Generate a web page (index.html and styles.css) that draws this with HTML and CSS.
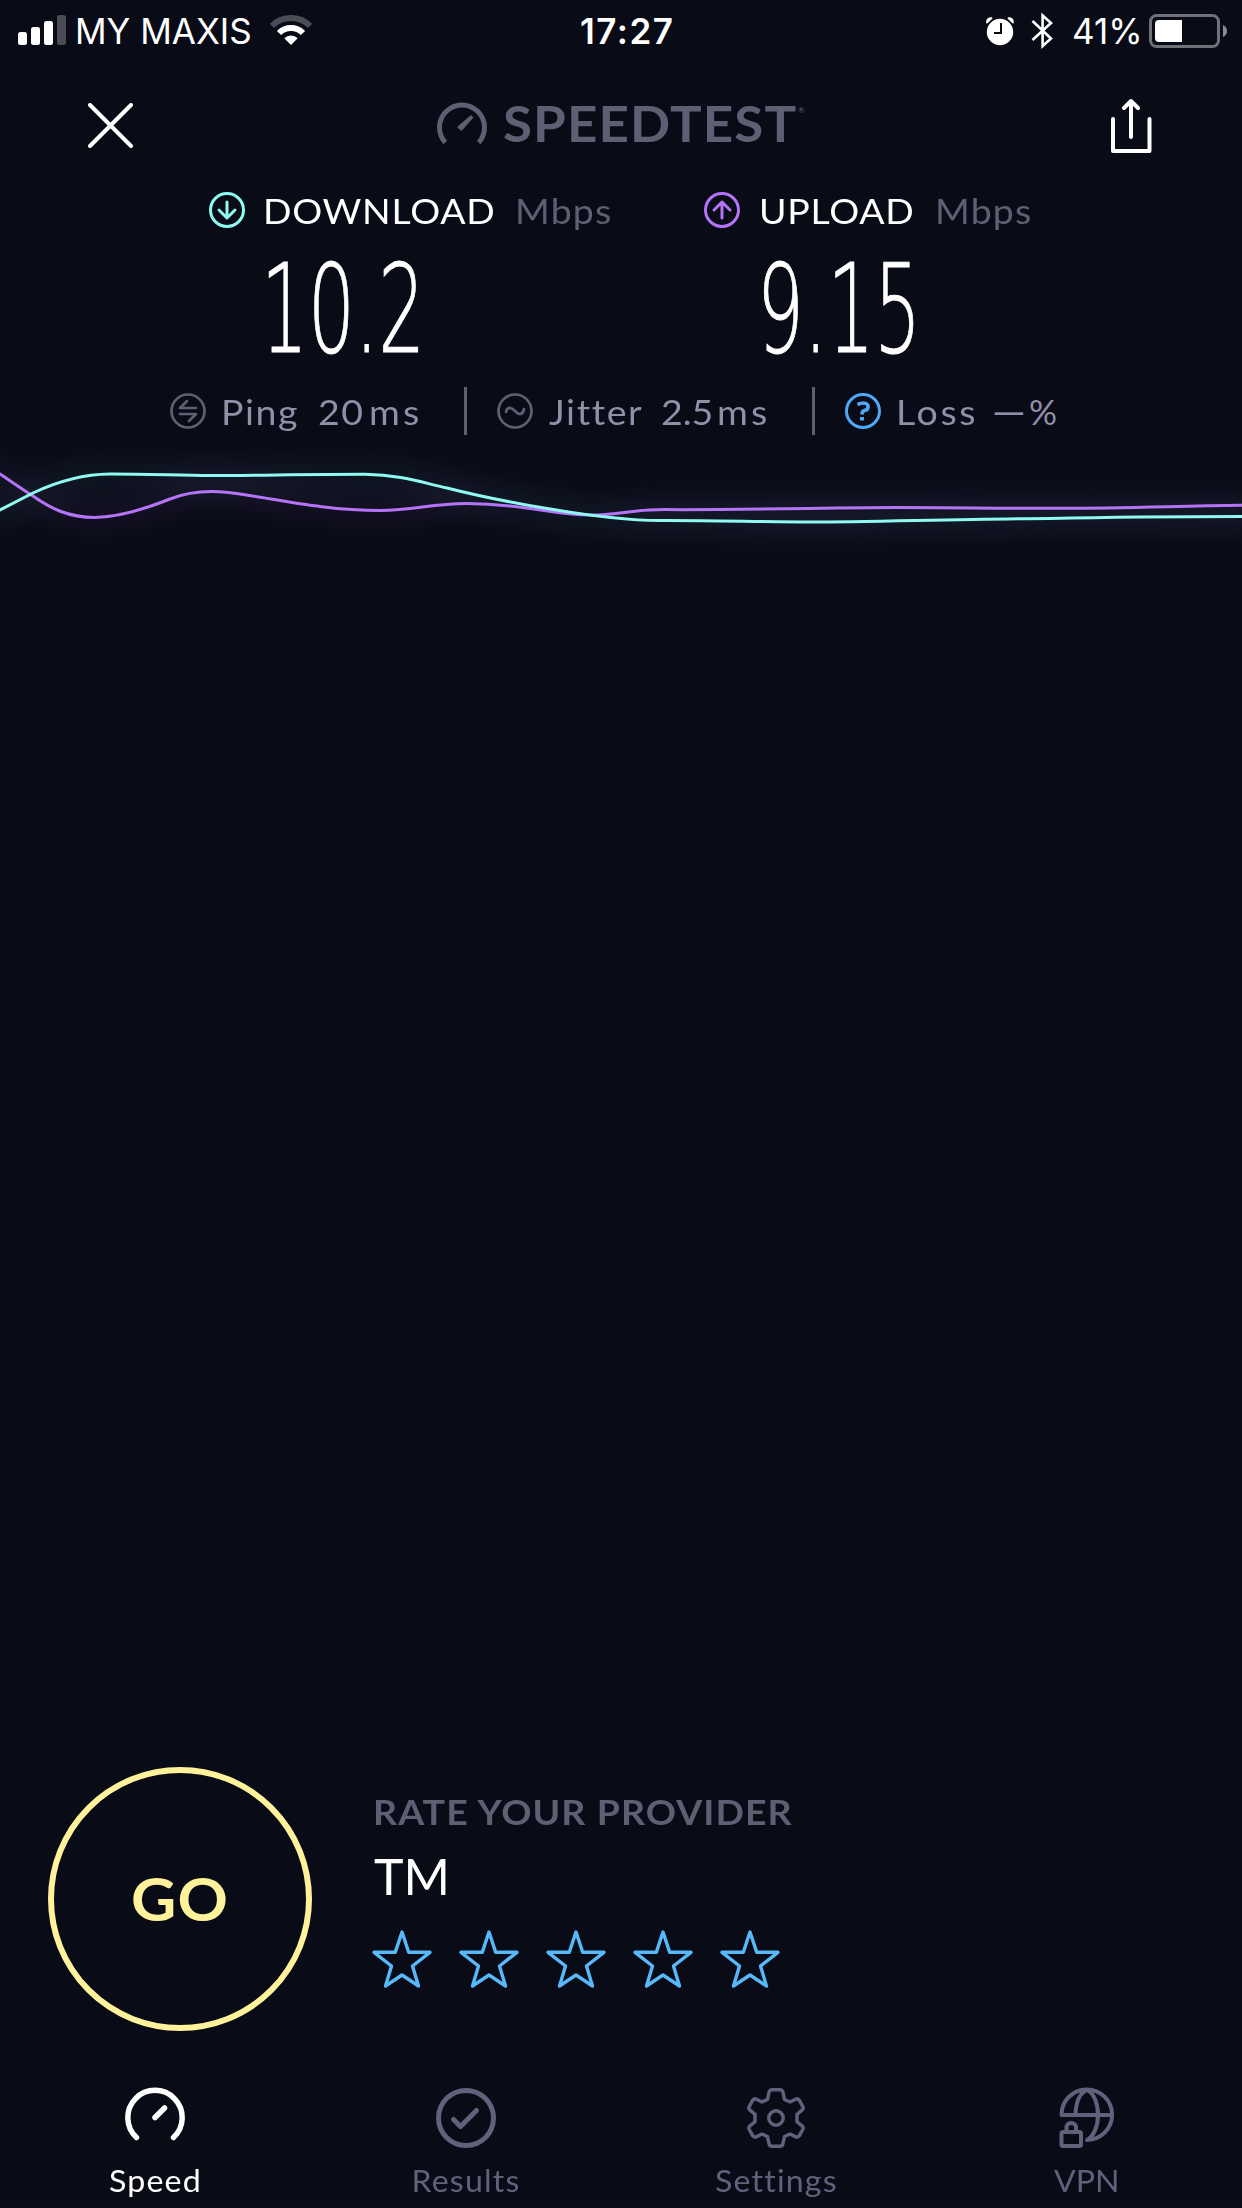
FILE: index.html
```html
<!DOCTYPE html>
<html lang="en">
<head>
<meta charset="utf-8">
<title>Speedtest</title>
<link rel="stylesheet" href="styles.css">
</head>
<body>
<main class="screen">
  <div class="status">
    <svg class="signal" viewBox="18 15 48 30" width="48" height="30" fill="#fff">
      <rect x="18" y="32" width="9" height="13" rx="2.5"/>
      <rect x="31" y="27" width="9" height="18" rx="2.5"/>
      <rect x="44" y="21" width="9" height="24" rx="2.5"/>
      <rect x="57" y="15" width="9" height="30" rx="2.5" fill="#4b4c55"/>
    </svg>
    <span>MY MAXIS</span>
    <svg class="signal" viewBox="269 15 44 30" width="44" height="30" fill="none" stroke-width="6">
      <path d="M271.9 25.9A27 27 0 0 1 310.1 25.9" stroke="#4b4c55"/>
      <path d="M279 33A17 17 0 0 1 303 33" stroke="#fff"/>
      <path d="M291 45l-6.7-6.7a9.5 9.5 0 0 1 13.4 0z" fill="#fff"/>
    </svg>
    <span class="time">17:27</span>
    <svg viewBox="985 12 30 36" width="30" height="36">
      <circle cx="1000" cy="31" r="13.2" fill="#fff"/>
      <path d="M986.3 22.5C985.500 18.500 988 15.800 992 16.300L992.500 17.600L987.600 22.200zM1013.700 22.500C1014.500 18.500 1012 15.800 1008 16.300L1007.500 17.600L1012.400 22.200z" fill="#fff"/>
      <path d="M1001 22V32H994" fill="none" stroke="#090b17" stroke-width="2"/>
    </svg>
    <svg viewBox="1030 12 24 38" width="24" height="38" fill="none" stroke="#fff" stroke-width="2.6">
      <path d="M1032.500 21L1051 38.500L1042.600 46V15.500L1051 23L1032.500 40"/>
    </svg>
    <span>41%</span>
    <svg viewBox="1149 13 80 34" width="80" height="34">
      <rect x="1150.500" y="14.500" width="68" height="31" rx="6" fill="none" stroke="#6f7078" stroke-width="3"/>
      <path d="M1159 19H1182V41H1159Q1155 41 1155 37V23Q1155 19 1159 19z" fill="#fff"/>
      <path d="M1223 24Q1227 26 1227 30T1223 36z" fill="#8b8c93"/>
    </svg>
  </div>

  <header class="header">
    <svg class="close" viewBox="88 103 45 45" width="45" height="45" stroke="#fff" stroke-width="4" stroke-linecap="round">
      <path d="M90 105L131 146M131 105L90 146"/>
    </svg>
    <svg viewBox="436 101 52 45" width="52" height="45">
      <path d="M445.300 142.500A22.500 22.500 0 1 1 478.700 142.500" fill="none" stroke="#5f5f73" stroke-width="5"/>
      <path d="M471 115L473.500 117.500L461.500 131L457 127z" fill="#5f5f73"/>
    </svg>
    <span class="brand">SPEEDTEST</span>
    <span class="reg">®</span>
    <svg class="share" viewBox="1110 98 43 56" width="43" height="56" fill="none" stroke="#fff" stroke-width="4" stroke-linecap="round" stroke-linejoin="round">
      <path d="M1113 119V151H1149.500V119M1131 137V101M1124 108L1131 101L1138 108"/>
    </svg>
  </header>

  <section class="labels">
    <svg viewBox="-20 -20 40 40" width="40" height="40" fill="none" stroke="#8ffbf0" stroke-width="3" stroke-linecap="round" stroke-linejoin="round">
      <circle r="16.500"/><path d="M0-8V8M-8 0L0 8L8 0"/>
    </svg>
    <span>DOWNLOAD</span><span class="unit">Mbps</span>
    <svg viewBox="-20 -20 40 40" width="40" height="40" fill="none" stroke="#b574f7" stroke-width="3" stroke-linecap="round" stroke-linejoin="round">
      <circle r="16.500"/><path d="M0 8V-8M-8 0L0-8L8 0"/>
    </svg>
    <span>UPLOAD</span><span class="unit">Mbps</span>
  </section>

  <section class="speeds"><span>10.2</span><span>9.15</span></section>

  <section class="quality">
    <svg viewBox="-20 -20 40 40" width="40" height="40" fill="none" stroke="#5f5f73" stroke-width="2.700" stroke-linecap="round" stroke-linejoin="round">
      <circle r="16.500"/><path d="M8-3H-8L-1-10M-8 3H8L1 10"/>
    </svg>
    <span>Ping</span><span>20</span><span class="ms">ms</span><i class="rule"></i>
    <svg viewBox="-20 -20 40 40" width="40" height="40" fill="none" stroke="#5f5f73" stroke-width="2.700" stroke-linecap="round">
      <circle r="16.500"/><path d="M-9 1C-8-4-4-4.500 0 0S8 4 9-2"/>
    </svg>
    <span>Jitter</span><span class="tight">2.5</span><span class="ms">ms</span><i class="rule"></i>
    <svg viewBox="-20 -20 40 40" width="40" height="40" fill="none" stroke="#4fa8f7" stroke-width="3">
      <circle r="16.500"/><path d="M-5.500-6.500Q0-9 3-7.500C6-6 6-1.500 1.500-.5Q-1 0-1 3.500" stroke-width="3.600"/><rect x="-3" y="6" width="4" height="3.500" fill="#4fa8f7" stroke="none"/>
    </svg>
    <span class="loss">Loss</span><span class="dash">—</span><span class="percent">%</span>
  </section>

  <svg class="chart" viewBox="0 437 1242 130" width="1242" height="130" fill="none">
    <defs>
      <filter id="glow" filterUnits="userSpaceOnUse" x="-60" y="400" width="1362" height="220"><feGaussianBlur stdDeviation="15"/></filter>
      <path id="up" d="M-20 460L0 474C12 482 22 489 33 496C50 508 68 517.500 95 517.500C120 517 145 509 170 499C185 493 198 491.500 212 491.500C230 491.500 240 494 262 497.500C295 503 335 510.500 380 510.500C415 510.500 430 503.500 467 503.500C530 504 550 515 590 515C620 515 625 510 665 509.600C760 510 830 507.600 897 507.600C960 507.600 1000 508.600 1060 508.300C1130 508 1180 506 1262 505"/>
      <path id="down" d="M-20 521L0 510L33 493C52 484 78 474.300 110 474C150 474 180 475.500 210 475.500C260 475.500 300 474.300 365 474.300C400 475 420 482 447 488C490 499 600 521 661 520.600C720 520.500 760 522 811 522C870 522 960 519 1050 518.500C1120 517 1180 516.500 1262 516.500"/>
    </defs>
    <g filter="url(#glow)" opacity=".17" stroke-width="16"><use href="#up" stroke="#7a4a9a"/><use href="#down" stroke="#5c8aa4"/></g>
    <use href="#up" stroke="#b574f7" stroke-width="3"/>
    <use href="#down" stroke="#8ffbf0" stroke-width="3"/>
  </svg>

  <section class="rate">
    <div class="go"><span>GO</span></div>
    <div class="provider">
      <div class="caption">RATE YOUR PROVIDER</div>
      <div class="name">TM</div>
      <svg class="stars" viewBox="370 1928 412 62" width="412" height="62" fill="none" stroke="#57b8fa" stroke-width="3.400" stroke-linejoin="round">
        <defs><path id="star" d="M402 1932L408.700 1952.300H430L412.500 1966L418.500 1986L402 1975L385.500 1986L391.500 1966L374 1952.300H395.300z"/></defs>
        <use href="#star"/><use href="#star" x="87"/><use href="#star" x="174"/><use href="#star" x="261"/><use href="#star" x="348"/>
      </svg>
    </div>
  </section>

  <nav class="nav">
    <div class="item active">
      <svg viewBox="-32 -32 64 64" width="64" height="64" fill="none" stroke="#fff" stroke-width="5.500" stroke-linecap="round">
        <path d="M-18.500 19.500A27.200 27.200 0 1 1 18.500 19.500M0-.5L9.500-10"/>
      </svg>
      <span>Speed</span>
    </div>
    <div class="item">
      <svg viewBox="-32 -32 64 64" width="64" height="64" fill="none" stroke="#62617b" stroke-width="5" stroke-linecap="round" stroke-linejoin="round">
        <circle r="27.500"/><path d="M-12.500 1.500L-5.500 8.500L10.500-7.500"/>
      </svg>
      <span>Results</span>
    </div>
    <div class="item">
      <svg viewBox="-32 -32 64 64" width="64" height="64" fill="none" stroke="#62617b" stroke-width="3.500" stroke-linejoin="round">
        <circle r="7.200"/>
        <path d="M-4.500-28.300H4.500Q6.500-28 7-25.500L8.500-18.500L14-16L20-19Q22-19.500 23.300-17.800L27-11Q27.500-9.300 26.500-8.300L21-3.700V3.700L26.500 8.300Q27.500 9.300 27 11L23.300 17.800Q22 19.500 20 19L14 16L8.500 18.500L7 25.500Q6.500 28 4.500 28.300H-4.500Q-6.500 28-7 25.500L-8.500 18.500L-14 16L-20 19Q-22 19.500-23.300 17.800L-27 11Q-27.500 9.300-26.500 8.300L-21 3.700V-3.700L-26.500-8.300Q-27.500-9.300-27-11L-23.300-17.800Q-22-19.500-20-19L-14-16L-8.500-18.500L-7-25.500Q-6.500-28-4.500-28.300z"/>
      </svg>
      <span>Settings</span>
    </div>
    <div class="item">
      <svg viewBox="1055 2086 64 64" width="64" height="64" fill="none" stroke="#62617b" stroke-width="4" stroke-linecap="round" stroke-linejoin="round">
        <path d="M1061.500 2115A25.300 25.300 0 1 1 1087 2140M1061.500 2115H1112M1075.500 2114C1076 2102 1080 2093 1087 2090C1094 2093 1098 2104 1098 2115S1094 2136 1087 2140"/>
        <rect x="1061.500" y="2132" width="19.500" height="14" rx="1.500"/>
        <path d="M1066.500 2131V2126.500A5 5 0 0 1 1076 2126.500V2131"/>
      </svg>
      <span class="flat">VPN</span>
    </div>
  </nav>
</main>
</body>
</html>
```
FILE: styles.css
```css
* { box-sizing: border-box; }

body {
  margin: 0;
  background: #090b17;
  color: #fff;
  font-family: Lato, "Open Sans", sans-serif;
}

.screen {
  display: flex;
  flex-direction: column;
  width: 1242px;
  height: 2208px;
  overflow: hidden;
}

svg { display: block; flex: none; }

.status {
  display: grid;
  grid-template-columns: 57px 194px 311px 405px 45px 42px 77px auto;
  align-items: center;
  height: 62px;
  padding-left: 18px;
  font: 400 35px/62px Inter, sans-serif;
  white-space: nowrap;
}
.signal { margin-top: -2px; }
.time { font-weight: 600; letter-spacing: 1.5px; }

.header {
  display: grid;
  grid-template-columns: 348px 67px 295px 312px auto;
  align-items: center;
  height: 122px;
  padding-left: 88px;
}
.close { margin-top: 5px; }
.brand {
  color: #5f5f73;
  font-size: 49px;
  font-weight: 700;
  line-height: 122px;
  letter-spacing: 1px;
  transform: scaleX(1.08);
  transform-origin: left center;
}
.reg { color: #5f5f73; font-size: 8px; line-height: 8px; margin-top: -26px; }
.share { margin-top: 6px; }

.labels {
  display: grid;
  grid-template-columns: 56px 252px 187px 57px 176px auto;
  align-items: center;
  height: 52px;
  padding-left: 207px;
  font-size: 35px;
  line-height: 50px;
  letter-spacing: .7px;
}
.labels span, .quality span {
  margin-top: -1px;
  transform: scaleX(1.07);
  transform-origin: left center;
}
.labels .unit { color: #5f5f73; letter-spacing: 1.1px; }

.speeds {
  display: grid;
  grid-template-columns: 496px 300px;
  height: 149px;
  padding-left: 261px;
  font: 200 123px/149px "DejaVu Sans", sans-serif;
}
.speeds span {
  width: 274px;
  margin-top: -1px;
  transform: scaleX(.6);
  transform-origin: left center;
  -webkit-text-stroke: 1px #fff;
}

.quality {
  display: grid;
  grid-template-columns: 53px 97px 51px 95px 31px 54px 112px 56px 95px 31px 53px 96px 37px auto;
  align-items: center;
  height: 52px;
  padding-left: 168px;
  color: #9190a8;
  font-size: 35px;
  line-height: 52px;
  letter-spacing: 1.5px;
}
.quality span { margin-top: 0; }
.quality .ms { letter-spacing: 3px; }
.quality .tight { letter-spacing: 0; }
.quality .loss { letter-spacing: 2.5px; }
.quality .dash { font-size: 40px; }
.quality .percent { transform: none; }
.rule { width: 3px; height: 48px; background: #5f5f73; }

.rate {
  display: flex;
  gap: 63px;
  height: 264px;
  margin-top: auto;
  padding-left: 48px;
}
.go {
  display: flex;
  align-items: center;
  justify-content: center;
  width: 264px;
  height: 264px;
  border: 6px solid #fff29a;
  border-radius: 50%;
  color: #fff29a;
  font-size: 60px;
  font-weight: 700;
  letter-spacing: 1px;
}
.go span { margin-top: -3px; transform: scaleX(1.04); }
.provider { padding-top: 23px; }
.caption {
  margin-left: -2px;
  color: #5f5f73;
  font-size: 35px;
  font-weight: 700;
  line-height: 42px;
  letter-spacing: 1px;
  white-space: nowrap;
  transform: scaleX(1.07);
  transform-origin: left center;
}
.name {
  margin-top: 14px;
  margin-left: -1px;
  font-size: 50px;
  line-height: 60px;
}
.stars { margin: 22px 0 0 -5px; }

.nav {
  display: grid;
  grid-template-columns: repeat(4, 1fr);
  height: 122px;
  margin-top: 55px;
}
.item {
  display: flex;
  flex-direction: column;
  align-items: center;
  gap: 12px;
  color: #62617b;
  font-size: 30px;
  line-height: 36px;
  letter-spacing: 1.1px;
}
.item span { padding-left: 1px; transform: scaleX(1.07); }
.item .flat { letter-spacing: .1px; }
.active { color: #fff; }
```
